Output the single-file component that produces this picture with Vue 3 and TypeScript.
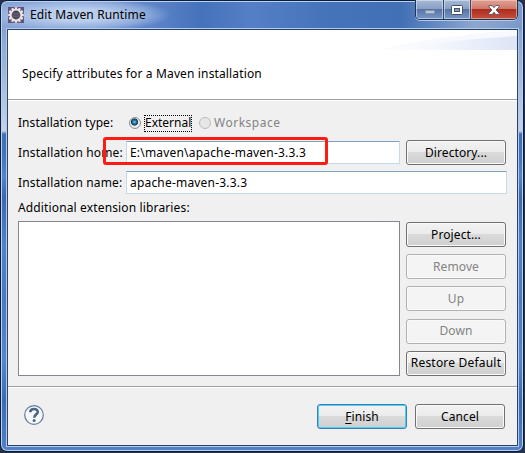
<script setup lang="ts">
import { ref } from 'vue'

interface SideButton {
  label: string
  disabled: boolean
}

const home = ref('E:\\maven\\apache-maven-3.3.3')
const name = ref('apache-maven-3.3.3')
const sideButtons: SideButton[] = [
  { label: 'Project...', disabled: false },
  { label: 'Remove', disabled: true },
  { label: 'Up', disabled: true },
  { label: 'Down', disabled: true },
  { label: 'Restore Default', disabled: false },
]
const teeth = Array.from({ length: 12 }, (_, i) => i * 30)
</script>

<template>
  <div class="window">
    <div class="frame">
      <header class="titlebar">
        <svg class="app-icon" width="16" height="16" viewBox="0 0 16 16">
          <rect width="16" height="16" fill="#62527e" />
          <rect
            v-for="a in teeth"
            :key="a"
            x="6.8"
            y="0.2"
            width="2.4"
            height="3"
            fill="#e9e6e3"
            :transform="`rotate(${a} 8 8)`"
          />
          <circle cx="8" cy="8" r="5.3" fill="#4a4558" stroke="#e9e6e3" stroke-width="1.8" />
          <path d="M4.5 6.5h7M4 8h8M4.5 9.5h7" stroke="#6f6982" stroke-width=".7" />
        </svg>
        <span class="title">Edit Maven Runtime</span>
        <div class="controls">
          <div class="ctl min"><svg width="10" height="4"><rect x=".5" y=".5" width="9" height="3" fill="#b9c6da" stroke="#8295b5" /></svg></div>
          <div class="ctl max">
            <svg width="12" height="10" viewBox="0 0 12 10">
              <rect x=".5" y=".5" width="11" height="9" rx="1" fill="#fff" stroke="#465267" />
              <rect x="3.5" y="3.5" width="5" height="3" fill="#7e9cc8" stroke="#465267" />
            </svg>
          </div>
          <div class="ctl close">
            <svg width="12" height="10" viewBox="0 0 12 10">
              <path
                d="M.8 .6h3.4L6 2.7 7.8 .6h3.4v1.2L8.1 5l3.1 3.2v1.2H7.8L6 7.3 4.2 9.4H.8V8.2L3.9 5 .8 1.8z"
                fill="#fff"
                stroke="#514d5c"
                stroke-width=".9"
              />
            </svg>
          </div>
        </div>
      </header>

      <main class="client">
        <section class="banner">
          <svg class="swoosh" width="140" height="20" viewBox="0 0 140 20">
            <defs>
              <linearGradient id="sw" x1="0" x2="1">
                <stop offset="0" stop-color="#fff" />
                <stop offset=".4" stop-color="#f5f8fd" />
                <stop offset="1" stop-color="#dce4f6" />
              </linearGradient>
            </defs>
            <path d="M0 20Q70 4 140 0V20z" fill="#f4f7fd" opacity=".7" />
            <path d="M0 20Q72 10 140 6V20z" fill="url(#sw)" />
          </svg>
          <span class="description">Specify attributes for a Maven installation</span>
        </section>

        <section class="form">
          <div class="row type-row">
            <span class="label type">Installation type:</span>
            <label class="radio selected">
              <i class="dot"></i><span class="focus"><span class="external">External</span></span>
            </label>
            <label class="radio disabled"><i class="dot"></i><span class="workspace">Workspace</span></label>
          </div>
          <div class="row home-row">
            <span class="label home">Installation home:</span>
            <div class="field"><span class="home-value">{{ home }}</span></div>
            <button class="btn side"><span>Directory...</span></button>
            <div class="highlight"></div>
          </div>
          <div class="row name-row">
            <span class="label name">Installation name:</span>
            <div class="field"><span class="name-value">{{ name }}</span></div>
          </div>
          <div class="library-label"><span>Additional extension libraries:</span></div>
          <div class="library">
            <div class="list"></div>
            <div class="side-buttons">
              <button v-for="b in sideButtons" :key="b.label" class="btn side" :disabled="b.disabled">
                <span>{{ b.label }}</span>
              </button>
            </div>
          </div>
        </section>

        <footer class="footer">
          <svg class="help" width="20" height="20" viewBox="0 0 20 20">
            <circle cx="10" cy="10" r="9.3" fill="#f7f8fa" stroke="#627b9e" stroke-width="1.2" />
            <path d="M6.2 7.2C6.3 3 13.9 3 13.8 7C13.7 9.5 10.2 9.4 10.2 12.8" fill="none" stroke="#4c6588" stroke-width="2.6" />
            <circle cx="10.1" cy="15.6" r="1.5" fill="#4c6588" />
          </svg>
          <button class="btn finish"><span><u>F</u>inish</span></button>
          <button class="btn cancel"><span>Cancel</span></button>
        </footer>
      </main>
    </div>
  </div>
</template>

<style>
body {
  margin: 0;
  overflow: hidden;
}
</style>

<style scoped>
* {
  box-sizing: border-box;
}
.window {
  width: 525px;
  height: 453px;
  background: #26324a;
  font: 12px/16px 'Noto Sans', sans-serif;
  letter-spacing: 0.14px;
  color: #000;
  white-space: nowrap;
}
.frame {
  width: 524px;
  height: 452px;
  margin: 0;
  padding: 0 5px 5px 6px;
  border: 1px solid #0e1c3b;
  border-radius: 7px;
  box-shadow: inset 0 0 0 1px #b8d2f1;
  background:
    radial-gradient(ellipse 92px 17px at 78px 14px, rgba(204, 220, 244, 0.8) 35%, rgba(180, 202, 236, 0.5) 75%, transparent),
    linear-gradient(90deg, #8aa7d7 0, #5c83c8 155px, #4472bb 200px, #557fc6 250px, #4674bb 320px, #4270b5 400px, #8ca8d0 475px, #7998c9 524px) 0 0 / 100% 29px no-repeat,
    linear-gradient(#6687c0 0, #8aa6d2 34px, #c5d3e8 130px, #4070b5 133px, #4573bc 155px, #5584c9 175px, #3d69ac 196px, #5281c7 245px, #4c79c0 300px, #5785cb 360px, #3d6bb1 400px, #5481c7 452px);
}
.titlebar {
  display: flex;
  align-items: flex-start;
  height: 27px;
}
.app-icon {
  margin: 6px 0 0 1px;
}
.title {
  margin: 6px 0 0 6px;
  letter-spacing: 0.14px;
}
.controls {
  display: flex;
  width: 103px;
  height: 20px;
  margin: -1px 0 0 auto;
  border: 1px solid #1e3555;
  border-top: 0;
  border-radius: 0 0 5px 5px;
  overflow: hidden;
  box-shadow: 0 1px #b4cae7;
}
.ctl {
  display: flex;
  align-items: center;
  justify-content: center;
  width: 28px;
  border-right: 1px solid #354866;
  background: linear-gradient(#a8bad5, #879fc5 48%, #5774a5 50%, #7897c7);
  box-shadow: inset 0 0 0 1px rgba(218, 231, 248, 0.6);
}
.min svg {
  margin-top: 5px;
}
.max {
  width: 27px;
}
.close {
  flex: 1;
  border-right: 0;
  background: linear-gradient(#e0a298, #cf7768 48%, #ae2d1d 50%, #c4513f);
  box-shadow: inset 0 0 0 1px rgba(255, 205, 190, 0.55);
}
.client {
  width: 511px;
  height: 417px;
  border: 1px solid #29436d;
  outline: 1px solid #b3cae8;
  background: #f0f0f0;
  margin-top: 1px;
}
.banner {
  position: relative;
  height: 71px;
  padding: 36px 0 0 14px;
  background: #fff;
  border-bottom: 1px solid #fff;
  box-shadow: inset 0 -1px #a0a0a0;
}
.swoosh {
  position: absolute;
  right: 0;
  top: 0;
}
.form {
  height: 285px;
  padding: 14px 11px 0 10px;
}
.row {
  display: flex;
  position: relative;
}
.type-row {
  height: 25px;
}
.home-row {
  height: 30px;
}
.name-row {
  height: 30px;
}
.label {
  width: 108px;
}
.type {
  letter-spacing: 0.05px;
}
.home-row .label,
.name-row .label {
  padding-top: 5px;
}
.radio {
  display: flex;
  height: 16px;
}
.dot {
  width: 12px;
  height: 12px;
  margin: 2px 3px 0 3px;
  border: 1px solid #8e8f8f;
  border-radius: 50%;
  background: linear-gradient(135deg, #c8cbce, #fff);
}
.selected .dot {
  background: radial-gradient(circle at 45% 40%, #86d8f5 0, #2683ae 1.5px, #153855 3.2px, #e6ebee 4px);
}
.focus {
  height: 17px;
  width: 48px;
  padding-left: 1px;
  outline: 1px dotted #000;
  outline-offset: -1px;
  letter-spacing: 0;
}
.disabled {
  margin-left: 4px;
  color: #838383;
}
.disabled .dot {
  border-color: #bcbcbc;
  background: #e7e7e7;
}
.workspace {
  letter-spacing: 0.5px;
}
.field {
  flex: 1;
  height: 23px;
  margin-top: 1px;
  padding: 3px 3px;
  border: 1px solid #c5daed;
  border-top-color: #7da2c0;
  border-radius: 1px;
  background: #fff;
  letter-spacing: 0.19px;
}
.name-row .field {
  margin-right: -1px;
}
.btn {
  height: 25px;
  padding: 0;
  border: 1px solid #707070;
  border-radius: 3px;
  box-shadow: inset 0 0 0 1px #fafafa;
  background: linear-gradient(#f2f2f2, #ebebeb 49%, #dadada 50%, #cfcfcf);
  font: inherit;
  letter-spacing: 0.1px;
  color: #000;
}
.side {
  width: 100px;
}
.side-buttons .side:last-child {
  letter-spacing: 0.2px;
}
.home-row .side {
  margin-left: 6px;
}
.btn:disabled {
  border-color: #adb2b5;
  background: #f4f4f4;
  color: #838383;
}
.highlight {
  position: absolute;
  left: 85px;
  top: -3px;
  width: 225px;
  height: 28px;
  border: 3px solid #fc1c12;
  border-radius: 3px;
}
.library-label {
  height: 21px;
}
.library {
  display: flex;
  gap: 6px;
}
.list {
  width: 382px;
  height: 155px;
  border: 1px solid #828790;
  background: #fff;
}
.side-buttons {
  display: grid;
  gap: 7px;
  margin-top: 1px;
}
.footer {
  display: flex;
  align-items: flex-start;
  height: 59px;
  padding: 17px 12px 0 16px;
  border-top: 1px solid #a0a0a0;
  box-shadow: inset 0 1px #fff;
}
.help {
  margin-top: 1px;
}
.finish,
.cancel {
  width: 90px;
}
.finish {
  margin-left: auto;
  border-color: #3c7fb1;
  box-shadow: inset 0 0 0 1px #48d1f7;
}
.cancel {
  margin-left: 8px;
}
u {
  text-underline-offset: 2px;
}
</style>
